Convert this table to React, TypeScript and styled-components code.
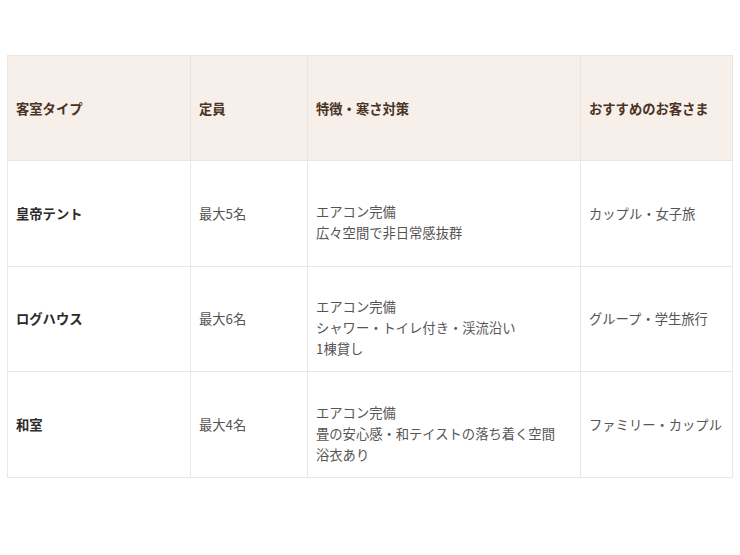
import styled, { createGlobalStyle } from 'styled-components';

const GlobalStyle = createGlobalStyle`
  body {
    margin: 0;
    background: #fff;
    font-family: 'Noto Sans CJK JP', 'Noto Sans', sans-serif;
  }
`;

const Wrapper = styled.div`
  padding: 55px 8px 0 7px;
`;

const Table = styled.table`
  width: 725px;
  border-collapse: collapse;
  table-layout: fixed;
  border: 1px solid #e9e4df;
`;

const Col = styled.col<{ w: number }>`
  width: ${(p) => p.w}px;
`;

const Th = styled.th`
  box-sizing: border-box;
  height: 105px;
  padding: 0 8px;
  background: #f6efea;
  border: 1px solid #ece5df;
  color: #4a3324;
  font-size: 13.3px;
  font-weight: 700;
  text-align: left;
  vertical-align: middle;
`;

const Td = styled.td<{ bold?: boolean }>`
  box-sizing: border-box;
  height: 105.6px;
  padding: 0 8px;
  border: 1px solid #ebe7e3;
  color: ${(p) => (p.bold ? '#2b2b2b' : '#555')};
  font-size: 13.3px;
  font-weight: ${(p) => (p.bold ? 700 : 400)};
  line-height: 21px;
  vertical-align: middle;
`;

const FeatureList = styled.div`
  padding-top: 18px;
`;

const rows = [
  {
    type: '皇帝テント',
    cap: '最大5名',
    features: ['エアコン完備', '広々空間で非日常感抜群'],
    guests: 'カップル・女子旅',
  },
  {
    type: 'ログハウス',
    cap: '最大6名',
    features: ['エアコン完備', 'シャワー・トイレ付き・渓流沿い', '1棟貸し'],
    guests: 'グループ・学生旅行',
  },
  {
    type: '和室',
    cap: '最大4名',
    features: ['エアコン完備', '畳の安心感・和テイストの落ち着く空間', '浴衣あり'],
    guests: 'ファミリー・カップル',
  },
];

const App = () => {
  return (
    <>
      <GlobalStyle />
      <Wrapper>
        <Table>
          <colgroup>
            <Col w={183} />
            <Col w={117} />
            <Col w={273} />
            <Col w={152} />
          </colgroup>
          <thead>
            <tr>
              <Th>客室タイプ</Th>
              <Th>定員</Th>
              <Th>特徴・寒さ対策</Th>
              <Th>おすすめのお客さま</Th>
            </tr>
          </thead>
          <tbody>
            {rows.map((r) => (
              <tr key={r.type}>
                <Td bold>{r.type}</Td>
                <Td>{r.cap}</Td>
                <Td>
                  <FeatureList>
                    {r.features.map((f, i) => (
                      <div key={i}>{f}</div>
                    ))}
                  </FeatureList>
                </Td>
                <Td>{r.guests}</Td>
              </tr>
            ))}
          </tbody>
        </Table>
      </Wrapper>
    </>
  );
};

export default App;
